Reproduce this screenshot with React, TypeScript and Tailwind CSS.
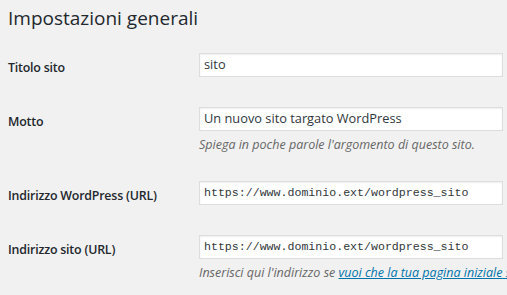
const sans = "font-['Open_Sans','Noto_Sans',sans-serif]";

function Field({ children, mono }: { children: React.ReactNode; mono?: boolean }) {
  return (
    <div
      className={`h-[24px] w-[304px] bg-white border border-[#dddddd] shadow-[inset_0_1px_2px_rgba(0,0,0,0.07)] flex items-center pl-[4px] text-[#32373c] whitespace-nowrap ${
        mono ? "font-['Liberation_Mono',monospace] text-[11.6px]" : "text-[12.8px]"
      }`}
    >
      {children}
    </div>
  );
}

function Row({
  label,
  value,
  mono,
  className = "",
  children,
}: {
  label: string;
  value: string;
  mono?: boolean;
  className?: string;
  children?: React.ReactNode;
}) {
  return (
    <div className={`flex items-start ${className}`}>
      <div className="w-[199px] shrink-0 pl-2 pt-[5px] text-[12.4px] tracking-[-0.2px] leading-[20px] font-semibold text-[#23282d] whitespace-nowrap">
        {label}
      </div>
      <div className="shrink-0">
        <Field mono={mono}>{value}</Field>
        {children}
      </div>
    </div>
  );
}

export default function App() {
  return (
    <div className={`w-[507px] h-[295px] overflow-hidden bg-[#f1f1f1] ${sans}`}>
      <div className="h-[53px] pl-2 pt-[3px]">
        <h1 className="text-[19px] leading-[30px] font-normal text-[#23282d]">Impostazioni generali</h1>
      </div>

      <Row label="Titolo sito" value="sito" />

      <Row label="Motto" value="Un nuovo sito targato WordPress" className="mt-[29px]">
        <p className="mt-[4px] text-[12.5px] leading-[20px] italic text-[#666666] whitespace-nowrap">
          Spiega in poche parole l'argomento di questo sito.
        </p>
      </Row>

      <Row
        label="Indirizzo WordPress (URL)"
        value="https://www.dominio.ext/wordpress_sito"
        mono
        className="mt-[26px]"
      />

      <Row
        label="Indirizzo sito (URL)"
        value="https://www.dominio.ext/wordpress_sito"
        mono
        className="mt-[29px]"
      >
        <p className="mt-[4px] text-[12.5px] leading-[20px] italic text-[#666666] whitespace-nowrap">
          Inserisci qui l'indirizzo se{" "}
          <a href="#" className="text-[#0073aa] underline">
            vuoi che la tua pagina iniziale sia diversa
          </a>
        </p>
      </Row>
    </div>
  );
}
